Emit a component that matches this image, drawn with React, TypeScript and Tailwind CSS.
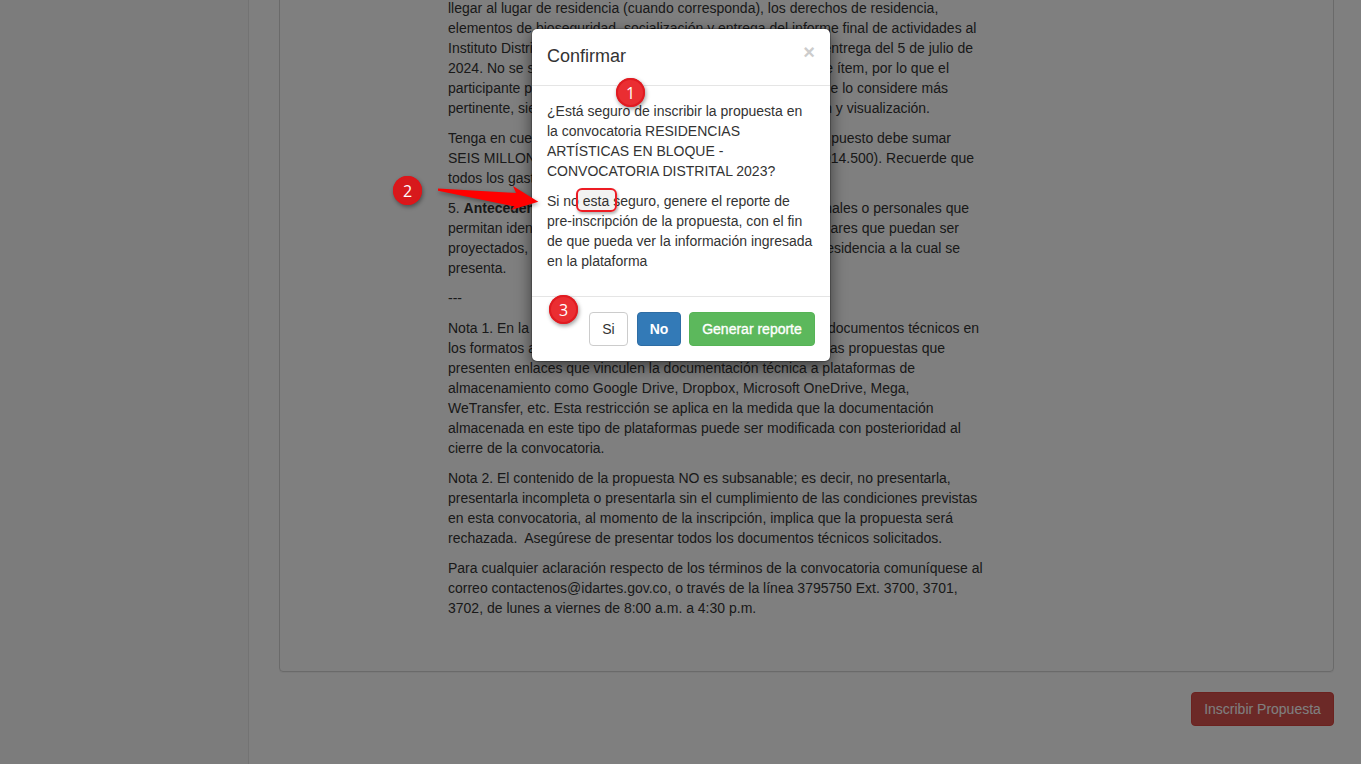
import type { ReactNode } from "react";

function Split({ left, right, className }: { left: ReactNode; right: string; className: string }) {
  return (
    <div className={`flex justify-between ${className}`}>
      <span>{left}</span>
      <span>{right}</span>
    </div>
  );
}

function Badge({ n, className }: { n: number; className: string }) {
  return (
    <div
      className={`absolute flex size-[29px] items-center justify-center rounded-full font-['Open_Sans',sans-serif] text-[16px] leading-none text-white ${className}`}
    >
      {n}
    </div>
  );
}

function Terms() {
  return (
    <div className="ml-[168px] w-[545px] space-y-[10px] whitespace-nowrap pt-[7px]">
      <div>
        <div>llegar al lugar de residencia (cuando corresponda), los derechos de residencia,</div>
        <div>elementos de bioseguridad, socialización y entrega del informe final de actividades al</div>
        <Split className="w-[525px]" left="Instituto Distri" right="entrega del 5 de julio de" />
        <Split className="w-[501px]" left="2024. No se s" right="e ítem, por lo que el" />
        <Split className="w-[500px]" left="participante p" right="e lo considere más" />
        <Split className="w-[482px]" left="pertinente, sie" right="n y visualización." />
      </div>
      <div>
        <Split className="w-[503px]" left="Tenga en cue" right="puesto debe sumar" />
        <Split className="w-[526px]" left="SEIS MILLON" right="914.500). Recuerde que" />
        <div>todos los gast</div>
      </div>
      <div>
        <Split className="w-[521px]" left={<>5. <b>Anteceden</b></>} right="nales o personales que" />
        <Split className="w-[511px]" left="permitan iden" right="ares que puedan ser" />
        <Split className="w-[512px]" left="proyectados," right="esidencia a la cual se" />
        <div>presenta.</div>
      </div>
      <div>---</div>
      <div>
        <Split className="w-[531px]" left="Nota 1. En la" right="documentos técnicos en" />
        <Split className="w-[497px]" left="los formatos a" right="as propuestas que" />
        <div>presenten enlaces que vinculen la documentación técnica a plataformas de</div>
        <div>almacenamiento como Google Drive, Dropbox, Microsoft OneDrive, Mega,</div>
        <div>WeTransfer, etc. Esta restricción se aplica en la medida que la documentación</div>
        <div>almacenada en este tipo de plataformas puede ser modificada con posterioridad al</div>
        <div>cierre de la convocatoria.</div>
      </div>
      <div>
        <div>Nota 2. El contenido de la propuesta NO es subsanable; es decir, no presentarla,</div>
        <div>presentarla incompleta o presentarla sin el cumplimiento de las condiciones previstas</div>
        <div>en esta convocatoria, al momento de la inscripción, implica que la propuesta será</div>
        <div>rechazada.&nbsp; Asegúrese de presentar todos los documentos técnicos solicitados.</div>
      </div>
      <div>
        <div>Para cualquier aclaración respecto de los términos de la convocatoria comuníquese al</div>
        <div>correo contactenos@idartes.gov.co, o través de la línea 3795750 Ext. 3700, 3701,</div>
        <div>3702, de lunes a viernes de 8:00 a.m. a 4:30 p.m.</div>
      </div>
    </div>
  );
}

function ConfirmDialog() {
  return (
    <div
      role="dialog"
      className="absolute left-[531px] top-[28px] w-[300px] rounded-[6px] border border-black/20 bg-white bg-clip-padding shadow-[0_5px_15px_rgba(0,0,0,0.5)]"
    >
      <div className="flex h-[57px] items-start justify-between border-b border-[#e5e5e5] px-[15px] pt-[14px]">
        <h4 className="text-[18px] leading-[26px]">Confirmar</h4>
        <button className="-mt-[1px] text-[20px] font-bold leading-[21px] text-[#cccccc]">×</button>
      </div>
      <div className="space-y-[10px] whitespace-nowrap px-[15px] pb-[25px] pt-[15px]">
        <p>
          ¿Está seguro de inscribir la propuesta en
          <br />
          la convocatoria RESIDENCIAS
          <br />
          ARTÍSTICAS EN BLOQUE -
          <br />
          CONVOCATORIA DISTRITAL 2023?
        </p>
        <p>
          Si no esta seguro, genere el reporte de
          <br />
          pre-inscripción de la propuesta, con el fin
          <br />
          de que pueda ver la información ingresada
          <br />
          en la plataforma
        </p>
      </div>
      <div className="flex justify-end border-t border-[#e5e5e5] p-[15px]">
        <button className="h-[34px] w-[39px] rounded-[4px] border border-[#cccccc] bg-white">Si</button>
        <button className="ml-[9px] h-[34px] w-[44px] rounded-[4px] border border-[#2e6da4] bg-[#337ab7] font-bold text-white">
          No
        </button>
        <button className="ml-[8px] h-[34px] w-[126px] whitespace-nowrap rounded-[4px] border border-[#56b456] bg-[#5cb85c] text-white [-webkit-text-stroke:0.35px_white]">
          Generar reporte
        </button>
      </div>
    </div>
  );
}

export default function App() {
  return (
    <div className="relative h-[764px] w-[1361px] overflow-hidden bg-white font-['Liberation_Sans',Arial,sans-serif] text-[14px] leading-[20px] text-[#333333]">
      <div className="flex h-full">
        <aside className="w-[249px] shrink-0 border-r border-[#e7e7e7] bg-[#f8f8f8]" />
        <main className="flex grow flex-col pl-[30px] pr-[27px]">
          <section className="-mt-[10px] h-[682px] shrink-0 rounded-[4px] border border-[#d4d4d4] shadow-[0_1px_1px_rgba(0,0,0,0.05)]">
            <Terms />
          </section>
          <button className="mt-[20px] h-[34px] w-[143px] self-end whitespace-nowrap rounded-[4px] border border-[#d9443f] bg-[#d9534f] text-white">
            Inscribir Propuesta
          </button>
        </main>
      </div>

      <div className="absolute inset-0 bg-black/50" />
      <ConfirmDialog />

      <div className="absolute left-[576px] top-[188px] h-[24px] w-[41px] rounded-[6px] border-2 border-[#ed1c24] bg-black/5 shadow-[1px_2px_3px_rgba(0,0,0,0.3)]" />
      <svg
        className="absolute left-[430px] top-[180px] drop-shadow-[1px_2px_2px_rgba(0,0,0,0.35)]"
        width="115"
        height="36"
        viewBox="430 180 115 36"
      >
        <path d="M438 188.5 L516 193 L513 186 L538.3 201.7 L511 210 L514.5 206.5 L438 190.8 Z" fill="#ff0000" />
      </svg>
      <Badge
        n={1}
        className="left-[616px] top-[78px] bg-[#ea2e32] shadow-[inset_0_0_0_2px_#e01b21,1px_2px_4px_rgba(0,0,0,0.4)]"
      />
      <Badge
        n={2}
        className="left-[393px] top-[176px] bg-[#d7191c] shadow-[inset_0_0_0_2px_#de1519,1px_2px_4px_rgba(0,0,0,0.4)]"
      />
      <Badge
        n={3}
        className="left-[549px] top-[295px] bg-[#ea2e32] shadow-[inset_0_0_0_2px_#e01b21,1px_2px_4px_rgba(0,0,0,0.4)]"
      />
    </div>
  );
}
